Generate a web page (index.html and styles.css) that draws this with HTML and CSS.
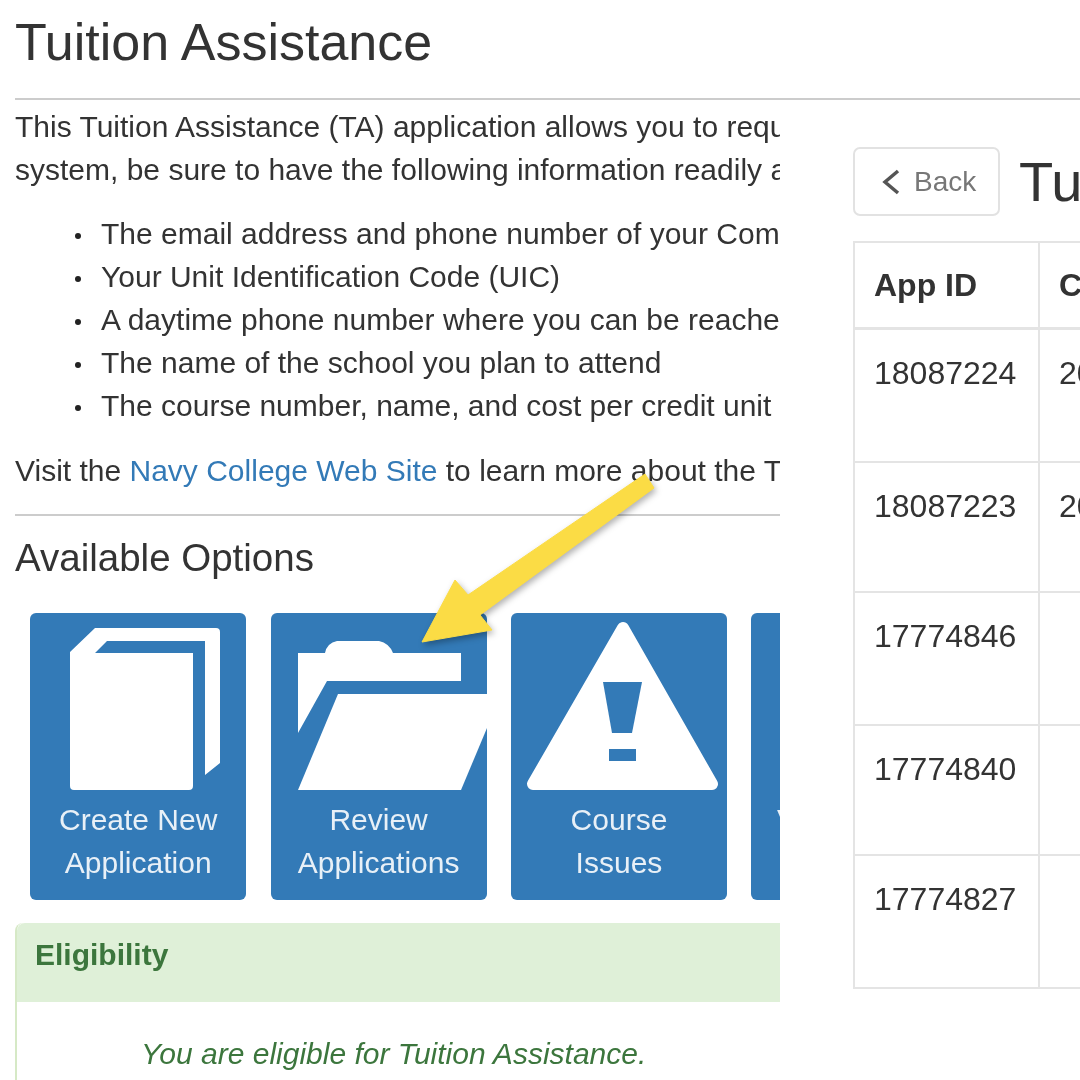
FILE: index.html
```html
<!DOCTYPE html>
<html lang="en">
  <head>
    <meta charset="UTF-8" />
    <title>Tuition Assistance</title>
    <link rel="stylesheet" href="styles.css">
  </head>
  <body>
    <div class="page">
      <h1 class="page-title">Tuition Assistance</h1>
      <div class="columns">
        <div class="left">
          <p>This Tuition Assistance (TA) application allows you to request TA for your courses. Before</p>
          <p>system, be sure to have the following information readily available:</p>
          <ul>
            <li>The email address and phone number of your Command approver</li>
            <li>Your Unit Identification Code (UIC)</li>
            <li>A daytime phone number where you can be reached</li>
            <li>The name of the school you plan to attend</li>
            <li>The course number, name, and cost per credit unit</li>
          </ul>
          <p class="visit">Visit the <a href="#">Navy College Web Site</a> to learn more about the TA program.</p>
          <hr />
          <h2>Available Options</h2>
          <div class="tiles">
            <a class="tile" href="#">
              <svg viewBox="0 0 216 185" width="216" height="185">
                <path fill="#fff" d="M40 39 L65 15 H186 Q190 15 190 19 V150 L175 162 V28 H77 L65 40 H163 V173 Q163 177 159 177 H44 Q40 177 40 173 Z" />
              </svg>
              <span>Create New<br />Application</span>
            </a>
            <a class="tile" href="#">
              <svg viewBox="0 0 216 185" width="216" height="185">
                <path fill="#fff" d="M27 40 H54 Q56 30 66 28 H108 Q118 30 122 40 H190 V68 H56 L27 120 Z" />
                <path fill="#fff" d="M67 81 H216 V115 L190 177 H27 Z" />
              </svg>
              <span>Review<br />Applications</span>
            </a>
            <a class="tile" href="#">
              <svg viewBox="0 0 216 185" width="216" height="185">
                <path fill="#fff" stroke="#fff" stroke-width="12" stroke-linejoin="round" d="M112 15 L201 171 H22 Z" />
                <path fill="#337ab7" d="M92 69 H131 L121 120 H101 Z" />
                <rect fill="#337ab7" x="98" y="136" width="27" height="12" />
              </svg>
              <span>Course<br />Issues</span>
            </a>
            <a class="tile" href="#">
              <svg viewBox="0 0 216 185" width="216" height="185"></svg>
              <span>View Details</span>
            </a>
          </div>
          <div class="panel">
            <div class="panel-heading">Eligibility</div>
            <div class="panel-body">You are eligible for Tuition Assistance.</div>
          </div>
        </div>
        <div class="right">
          <div class="right-head">
            <a class="back" href="#">
              <svg viewBox="0 0 20 28" width="20" height="28">
                <polyline points="16,3 3,14 16,25" fill="none" stroke="#555" stroke-width="3.5" />
              </svg>
              Back
            </a>
            <div class="right-title">Tuition Assistance Applications</div>
          </div>
          <table>
            <tr>
              <th class="col-id">App ID</th>
              <th>Created</th>
            </tr>
            <tr class="row-a">
              <td>18087224</td>
              <td>2018-01-10</td>
            </tr>
            <tr class="row-b">
              <td>18087223</td>
              <td>2018-01-10</td>
            </tr>
            <tr class="row-a">
              <td>17774846</td>
              <td></td>
            </tr>
            <tr class="row-b">
              <td>17774840</td>
              <td></td>
            </tr>
            <tr class="row-a">
              <td>17774827</td>
              <td></td>
            </tr>
          </table>
        </div>
      </div>
      <svg class="arrow" viewBox="0 0 260 190" width="260" height="190">
        <polygon fill="#fbdc45" stroke="#fbdc45" stroke-width="1" stroke-linejoin="round" points="12,172 45,110 58,125 235,4 244,18 70,145 82,160" />
      </svg>
    </div>
  </body>
</html>
```
FILE: styles.css
```css
html,
body {
  margin: 0;
  height: 100%;
  overflow: hidden;
  background-color: white;
}
.page {
  position: relative;
  width: 1080px;
  height: 1080px;
  overflow: hidden;
  font-family: "Liberation Sans", Arial, sans-serif;
  font-size: 30px;
  line-height: 43px;
  color: #333;
  filter: blur(0.7px);
}
.page-title {
  margin: 0 0 0 15px;
  padding: 12px 0 26px;
  height: 60px;
  line-height: 60px;
  font-size: 52px;
  font-weight: normal;
  border-bottom: 2px solid #ccc;
}
.columns {
  display: flex;
}
.left {
  width: 765px;
  margin-left: 15px;
  flex-shrink: 0;
  overflow: hidden;
  padding-top: 5px;
  height: 975px;
}
.left p {
  margin: 0;
  white-space: nowrap;
}
.left ul {
  margin: 21px 0 22px;
  padding-left: 86px;
  white-space: nowrap;
  list-style: none;
}
.left li::before {
  content: "";
  display: inline-block;
  width: 6px;
  height: 6px;
  margin-left: -26px;
  margin-right: 20px;
  border-radius: 50%;
  background-color: #222;
  vertical-align: middle;
}
.left a {
  color: #337ab7;
  text-decoration: none;
}
hr {
  border: none;
  border-top: 2px solid #ccc;
  margin: 22px 0 0;
}
h2 {
  margin: 0;
  padding: 22px 0 35px;
  font-size: 38.5px;
  line-height: 40px;
  font-weight: normal;
}
.tiles {
  display: flex;
  gap: 24.4px;
  margin-left: 15.2px;
}
.tile {
  display: block;
  flex: 0 0 216px;
  width: 216px;
  height: 287px;
  box-sizing: border-box;
  overflow: hidden;
  text-align: center;
  background-color: #337ab7;
  border-radius: 6px;
}
.left .tile {
  color: #e8f0f7;
}
.tile svg {
  display: block;
}
.panel {
  margin-top: 23px;
  width: 790px;
  height: 200px;
  border-left: 2px solid #d6e9c6;
  border-top-left-radius: 8px;
}
.panel-heading {
  height: 79px;
  line-height: 64px;
  padding-left: 18px;
  font-weight: bold;
  color: #3c763d;
  background-color: #dff0d8;
  border-top-left-radius: 8px;
}
.panel-body {
  padding: 30px 0 0 124px;
  font-style: italic;
  color: #3c763d;
}
.right {
  flex: 1;
  margin-left: 73px;
  overflow: hidden;
  padding-top: 47px;
  font-size: 32px;
}
.right-head {
  display: flex;
  align-items: center;
  gap: 19px;
  white-space: nowrap;
}
.back {
  display: flex;
  align-items: center;
  gap: 12px;
  flex-shrink: 0;
  width: 147px;
  height: 69px;
  box-sizing: border-box;
  padding-left: 27px;
  border: 2px solid #e2e2e2;
  border-radius: 7px;
  font-size: 28px;
  color: #777;
  text-decoration: none;
}
.right-title {
  font-size: 56px;
  line-height: 60px;
}
table {
  margin-top: 25px;
  width: 500px;
  border-collapse: collapse;
  table-layout: fixed;
}
th,
td {
  border: 2px solid #e4e4e4;
  padding: 22px 19px;
  text-align: left;
  vertical-align: top;
}
th {
  padding-top: 21px;
  padding-bottom: 20px;
  border-bottom-width: 3px;
}
.col-id {
  width: 145px;
}
.row-a td {
  height: 87px;
}
.row-b td {
  height: 84px;
}
.arrow {
  position: absolute;
  left: 410px;
  top: 470px;
  filter: drop-shadow(2px 3px 3px rgba(0, 0, 0, 0.3));
}
```
